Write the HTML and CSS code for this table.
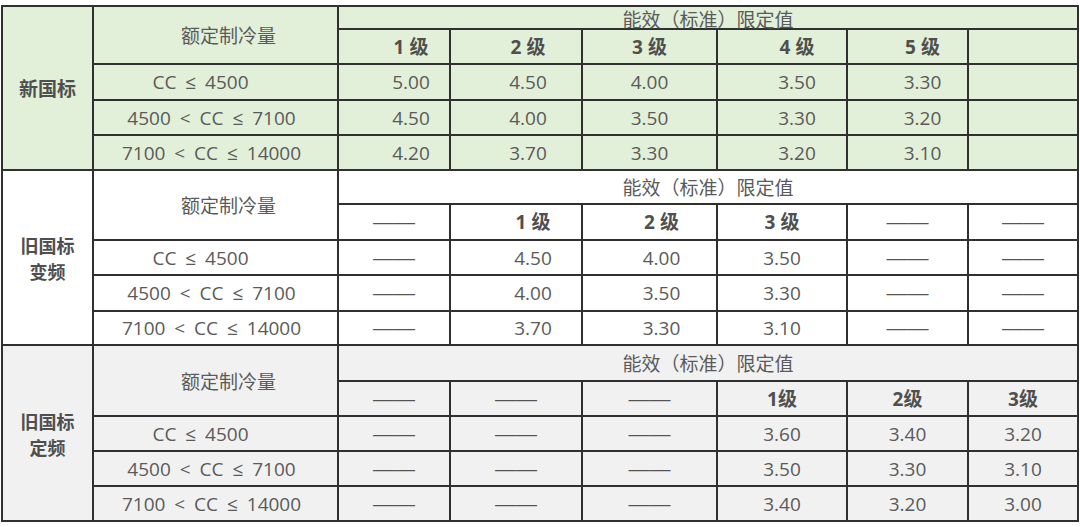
FILE: index.html
```html
<!DOCTYPE html>
<html lang="zh-CN">
<head>
<meta charset="utf-8">
<title>能效限定值</title>
<link rel="stylesheet" href="styles.css">
</head>
<body>
<table class="grid">
  <colgroup>
    <col class="w1"><col class="w2"><col class="w3"><col class="w4"><col class="w5"><col class="w6"><col class="w7"><col class="w8">
  </colgroup>
  <tbody class="sec-new">
    <tr class="r23">
      <td rowspan="5" class="label">新国标</td>
      <td rowspan="2" class="cap qty">额定制冷量</td>
      <td colspan="6" class="cap top">能效（标准）限定值</td>
    </tr>
    <tr class="r35">
      <td class="grade s17">1 级</td><td class="grade s12">2 级</td><td class="grade">3 级</td><td class="grade s15">4 级</td><td class="grade s15">5 级</td><td></td>
    </tr>
    <tr class="r36">
      <td class="range first">CC ≤ 4500</td>
      <td class="s17">5.00</td><td class="s12">4.50</td><td>4.00</td><td class="s15">3.50</td><td class="s15">3.30</td><td></td>
    </tr>
    <tr class="r35">
      <td class="range">4500 &lt; CC ≤ 7100</td>
      <td class="s17">4.50</td><td class="s12">4.00</td><td>3.50</td><td class="s15">3.30</td><td class="s15">3.20</td><td></td>
    </tr>
    <tr class="r35">
      <td class="range">7100 &lt; CC ≤ 14000</td>
      <td class="s17">4.20</td><td class="s12">3.70</td><td>3.30</td><td class="s15">3.20</td><td class="s15">3.10</td><td></td>
    </tr>
  </tbody>
  <tbody class="sec-var">
    <tr class="r34">
      <td rowspan="5" class="label two"><div class="ln">旧国标</div><div class="ln">变频</div></td>
      <td rowspan="2" class="cap qty">额定制冷量</td>
      <td colspan="6" class="cap">能效（标准）限定值</td>
    </tr>
    <tr class="r36">
      <td class="dash">——</td><td class="grade s17">1 级</td><td class="grade s12">2 级</td><td class="grade">3 级</td><td class="dash">——</td><td class="dash">——</td>
    </tr>
    <tr class="r35">
      <td class="range first">CC ≤ 4500</td>
      <td class="dash">——</td><td class="s17">4.50</td><td class="s12">4.00</td><td>3.50</td><td class="dash">——</td><td class="dash">——</td>
    </tr>
    <tr class="r36">
      <td class="range">4500 &lt; CC ≤ 7100</td>
      <td class="dash">——</td><td class="s17">4.00</td><td class="s12">3.50</td><td>3.30</td><td class="dash">——</td><td class="dash">——</td>
    </tr>
    <tr class="r34">
      <td class="range">7100 &lt; CC ≤ 14000</td>
      <td class="dash">——</td><td class="s17">3.70</td><td class="s12">3.30</td><td>3.10</td><td class="dash">——</td><td class="dash">——</td>
    </tr>
  </tbody>
  <tbody class="sec-fix">
    <tr class="r36">
      <td rowspan="5" class="label two"><div class="ln">旧国标</div><div class="ln">定频</div></td>
      <td rowspan="2" class="cap qty">额定制冷量</td>
      <td colspan="6" class="cap">能效（标准）限定值</td>
    </tr>
    <tr class="r35">
      <td class="dash">——</td><td class="dash">——</td><td class="dash">——</td><td class="grade">1级</td><td class="grade">2级</td><td class="grade">3级</td>
    </tr>
    <tr class="r35">
      <td class="range first">CC ≤ 4500</td>
      <td class="dash">——</td><td class="dash">——</td><td class="dash">——</td><td>3.60</td><td>3.40</td><td>3.20</td>
    </tr>
    <tr class="r35">
      <td class="range">4500 &lt; CC ≤ 7100</td>
      <td class="dash">——</td><td class="dash">——</td><td class="dash">——</td><td>3.50</td><td>3.30</td><td>3.10</td>
    </tr>
    <tr class="r35">
      <td class="range">7100 &lt; CC ≤ 14000</td>
      <td class="dash">——</td><td class="dash">——</td><td class="dash">——</td><td>3.40</td><td>3.20</td><td>3.00</td>
    </tr>
  </tbody>
</table>
</body>
</html>
```

FILE: styles.css
```css
html, body {
  margin: 0;
  padding: 0;
  background: #ffffff;
}

.grid {
  margin: 5px 0 0 1px;
  border-collapse: collapse;
  table-layout: fixed;
  width: 1078px;
  font-family: "Open Sans", "Noto Sans CJK SC", sans-serif;
  font-size: 19px;
  color: #5a5a5a;
}

.w1 { width: 91px; }
.w2 { width: 245px; }
.w3 { width: 112px; }
.w4 { width: 132px; }
.w5 { width: 135px; }
.w6 { width: 130px; }
.w7 { width: 121px; }
.w8 { width: 110px; }

.grid td {
  border: 2px solid #303030;
  padding: 0;
  text-align: center;
  vertical-align: middle;
  line-height: 22px;
  white-space: nowrap;
}

.r23 { height: 23px; }
.r34 { height: 34px; }
.r35 { height: 35px; }
.r36 { height: 36px; }

.sec-new td { background: #e2efd9; }
.sec-var td { background: #ffffff; }
.sec-fix td { background: #f1f1f1; }

.label {
  font-family: "Noto Sans CJK SC", sans-serif;
  font-weight: 700;
  font-size: 19px;
  line-height: 23px;
  color: #4f4f4f;
}

.label.two {
  font-size: 18px;
  padding-top: 1px;
}

.ln {
  height: 26px;
  line-height: 26px;
}

.cap {
  font-family: "Noto Sans CJK SC", sans-serif;
  font-size: 19px;
}

.cap.top {
  line-height: 19px;
  padding-top: 1px;
}

.cap.qty {
  padding-left: 26px;
}

.grade {
  font-weight: 700;
  color: #4f4f4f;
}

.range {
  word-spacing: 4px;
  padding-right: 8px !important;
}

.range.first { padding-right: 30px !important; }

.dash {
  font-family: "Liberation Sans", sans-serif;
  font-size: 21px;
  color: #555555;
}

.s12 { padding-left: 24px !important; }
.s15 { padding-left: 30px !important; }
.s17 { padding-left: 34px !important; }
```
